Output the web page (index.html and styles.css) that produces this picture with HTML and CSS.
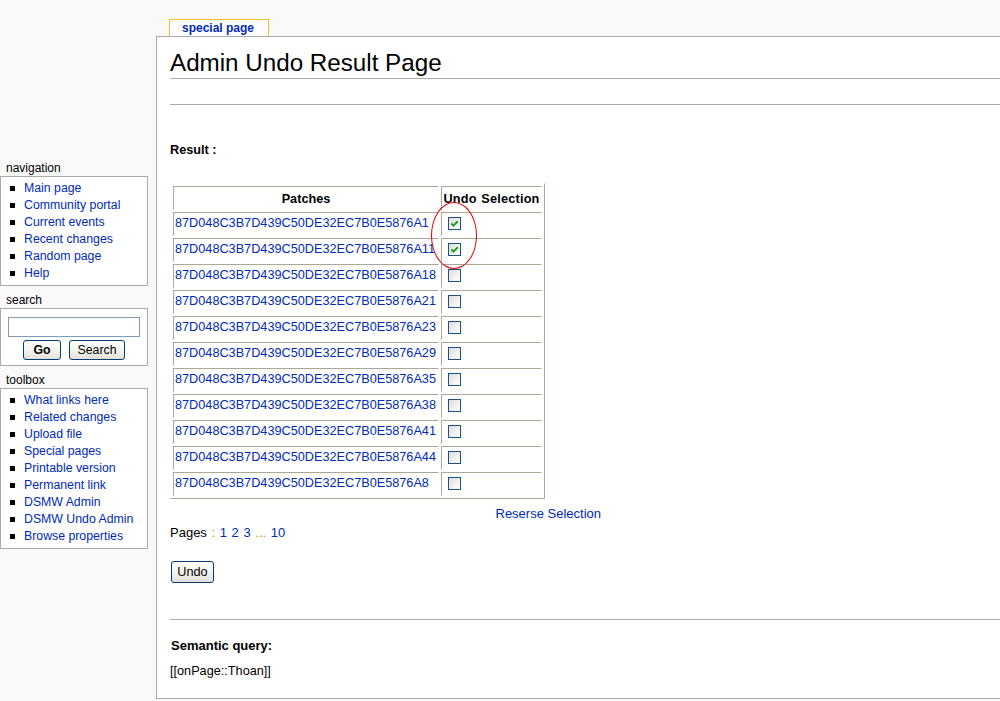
FILE: index.html
```html
<!DOCTYPE html>
<html>
<head>
<meta charset="utf-8">
<title>Admin Undo Result Page</title>
<link rel="stylesheet" href="styles.css">
</head>
<body>
<div class="page">
  <aside class="sidebar">
    <div class="portlet">
      <h5 class="portlet-title">navigation</h5>
      <ul class="portlet-body links">
        <li><a href="#">Main page</a></li>
        <li><a href="#">Community portal</a></li>
        <li><a href="#">Current events</a></li>
        <li><a href="#">Recent changes</a></li>
        <li><a href="#">Random page</a></li>
        <li><a href="#">Help</a></li>
      </ul>
    </div>
    <div class="portlet">
      <h5 class="portlet-title">search</h5>
      <div class="portlet-body search-body">
        <div class="search-input"></div>
        <div class="search-buttons">
          <span class="xp-btn go-btn">Go</span>
          <span class="xp-btn search-btn">Search</span>
        </div>
      </div>
    </div>
    <div class="portlet">
      <h5 class="portlet-title">toolbox</h5>
      <ul class="portlet-body links">
        <li><a href="#">What links here</a></li>
        <li><a href="#">Related changes</a></li>
        <li><a href="#">Upload file</a></li>
        <li><a href="#">Special pages</a></li>
        <li><a href="#">Printable version</a></li>
        <li><a href="#">Permanent link</a></li>
        <li><a href="#">DSMW Admin</a></li>
        <li><a href="#">DSMW Undo Admin</a></li>
        <li><a href="#">Browse properties</a></li>
      </ul>
    </div>
  </aside>

  <main class="column">
    <div class="tabs"><span class="tab">special page</span></div>
    <div class="content">
      <h1 class="first-heading">Admin Undo Result Page</h1>
      <div class="subline"></div>
      <p class="result-label">Result :</p>

      <div class="table-wrap">
        <table class="patches">
          <thead>
            <tr><th class="c1">Patches</th><th class="c2">Undo Selection</th></tr>
          </thead>
          <tbody>
            <tr><td><a href="#">87D048C3B7D439C50DE32EC7B0E5876A1</a></td><td><span class="cb checked"><svg viewBox="0 0 11 11" width="11" height="11"><path d="M2.2 5.4 L4.4 7.6 L8.8 3.2" fill="none" stroke="#21a121" stroke-width="2"/></svg></span></td></tr>
            <tr><td><a href="#">87D048C3B7D439C50DE32EC7B0E5876A11</a></td><td><span class="cb checked"><svg viewBox="0 0 11 11" width="11" height="11"><path d="M2.2 5.4 L4.4 7.6 L8.8 3.2" fill="none" stroke="#21a121" stroke-width="2"/></svg></span></td></tr>
            <tr><td><a href="#">87D048C3B7D439C50DE32EC7B0E5876A18</a></td><td><span class="cb"></span></td></tr>
            <tr><td><a href="#">87D048C3B7D439C50DE32EC7B0E5876A21</a></td><td><span class="cb"></span></td></tr>
            <tr><td><a href="#">87D048C3B7D439C50DE32EC7B0E5876A23</a></td><td><span class="cb"></span></td></tr>
            <tr><td><a href="#">87D048C3B7D439C50DE32EC7B0E5876A29</a></td><td><span class="cb"></span></td></tr>
            <tr><td><a href="#">87D048C3B7D439C50DE32EC7B0E5876A35</a></td><td><span class="cb"></span></td></tr>
            <tr><td><a href="#">87D048C3B7D439C50DE32EC7B0E5876A38</a></td><td><span class="cb"></span></td></tr>
            <tr><td><a href="#">87D048C3B7D439C50DE32EC7B0E5876A41</a></td><td><span class="cb"></span></td></tr>
            <tr><td><a href="#">87D048C3B7D439C50DE32EC7B0E5876A44</a></td><td><span class="cb"></span></td></tr>
            <tr><td><a href="#">87D048C3B7D439C50DE32EC7B0E5876A8</a></td><td><span class="cb"></span></td></tr>
          </tbody>
        </table>
        <div class="red-ring"></div>
      </div>

      <div class="reverse"><a href="#">Reserse Selection</a></div>
      <div class="pages">Pages <span class="sep">:</span> <a href="#">1</a> <a href="#">2</a> <a href="#">3</a> <span class="sep">...</span> <a href="#">10</a></div>
      <div class="undo-row"><span class="xp-btn undo-btn">Undo</span></div>
      <div class="rule"></div>
      <p class="sq-label">Semantic query:</p>
      <p class="sq-text">[[onPage::Thoan]]</p>
    </div>
  </main>
</div>
</body>
</html>
```

FILE: styles.css
```css
* { box-sizing: border-box; }
html, body {
  margin: 0;
  padding: 0;
  overflow: hidden;
}
body {
  background: #f9f9f9;
  font-family: "Liberation Sans", Arial, sans-serif;
  font-size: 12.7px;
  color: #000;
  width: 1000px;
  height: 701px;
}
a { color: #002bb8; text-decoration: none; }

.page {
  display: flex;
  align-items: flex-start;
}

/* Sidebar */
.sidebar {
  width: 148px;
  flex: 0 0 148px;
  padding-top: 160px;
}
.portlet + .portlet { margin-top: 6px; }
.portlet-title {
  margin: 0;
  padding: 0 6px;
  font-size: 12px;
  font-weight: normal;
  line-height: 16px;
  height: 16px;
  color: #000;
}
.portlet-body {
  background: #fff;
  border: 1px solid #aaa;
  margin: 0;
}
.links {
  list-style: none;
  padding: 3px 0 3px 0;
}
.links li {
  display: flex;
  align-items: center;
  height: 17px;
  font-size: 12.3px;
  line-height: 17px;
}
.links li::before {
  content: "";
  width: 5px;
  height: 5px;
  background: #000;
  margin-left: 9px;
  margin-right: 9px;
  flex: 0 0 5px;
}
.search-body {
  padding: 8px 0 5px 7px;
}
.search-input {
  width: 132px;
  height: 20px;
  border: 1px solid #7f9db9;
  background: #fff;
}
.search-buttons {
  display: flex;
  justify-content: center;
  gap: 8px;
  margin-top: 3px;
  padding-right: 7px;
}
.xp-btn {
  display: inline-flex;
  align-items: center;
  justify-content: center;
  height: 20px;
  border: 1px solid #003c74;
  border-radius: 3px;
  background: linear-gradient(#ffffff 0%, #f4f3ee 50%, #e3e1d6 100%);
  font-size: 12.3px;
  color: #000;
}
.go-btn { width: 38px; font-weight: bold; }
.search-btn { width: 56px; }

/* Column */
.column {
  margin-left: 8px;
  flex: 1;
  min-width: 0;
}
.tabs {
  height: 36px;
  display: flex;
  align-items: flex-end;
  padding-left: 13px;
}
.tab {
  height: 17px;
  border: 1px solid #fabd23;
  border-bottom: none;
  background: #fff;
  padding: 0 14px 0 12px;
  font-size: 12px;
  font-weight: bold;
  line-height: 16px;
  color: #002bb8;
}
.content {
  background: #fff;
  border: 1px solid #aaa;
  border-right: none;
  height: 663px;
  padding-left: 13px;
}
.first-heading {
  margin: 0;
  padding: 12px 0 1px 0;
  font-size: 24.2px;
  font-weight: normal;
  line-height: 28px;
  border-bottom: 1px solid #aaa;
}
.subline {
  height: 26px;
  border-bottom: 1px solid #aaa;
}
.result-label {
  margin: 37px 0 0 0;
  font-weight: bold;
  line-height: 16px;
}
.table-wrap {
  position: relative;
  margin-top: 25px;
  width: 375px;
}
.patches {
  border-collapse: separate;
  border-spacing: 2px;
  table-layout: fixed;
  width: 375px;
  border-top: 1px solid #fff;
  border-left: 1px solid #fff;
  border-right: 1px solid #aca899;
  border-bottom: 1px solid #aca899;
}
.patches th, .patches td {
  border-top: 1px solid #aca899;
  border-left: 1px solid #aca899;
  border-right: 1px solid #fff;
  border-bottom: 1px solid #fff;
  padding: 1px;
  height: 24px;
  line-height: 20px;
  font-size: 12.7px;
  white-space: nowrap;
  overflow: hidden;
}
.patches th { font-weight: bold; text-align: center; padding: 2px 1px 0 1px; }
.patches th.c1 { width: 266px; }
.patches th.c2 { width: 101px; word-spacing: 1px; letter-spacing: 0.2px; }
.patches td { text-align: left; }
.patches td a { position: relative; top: -1px; }
.cb {
  display: inline-flex;
  align-items: center;
  justify-content: center;
  width: 13px;
  height: 13px;
  margin-left: 5px;
  vertical-align: middle;
  border: 1px solid #1c5180;
  background: linear-gradient(135deg, #dcdcd7 0%, #f5f5f2 70%, #ffffff 100%);
  position: relative;
  top: -1px;
}
.red-ring {
  position: absolute;
  left: 261px;
  top: 19px;
  width: 46px;
  height: 67px;
  border: 1px solid #e00000;
  border-radius: 50%;
}
.reverse {
  width: 431px;
  text-align: right;
  margin-top: 7px;
  line-height: 16px;
  font-size: 13px;
}
.pages {
  margin-top: 3px;
  line-height: 16px;
  font-size: 13px;
  word-spacing: 1px;
}
.pages .sep { color: #c88a00; }
.undo-row {
  margin-top: 21px;
  padding-left: 1px;
}
.undo-btn {
  width: 43px;
  height: 22px;
  font-size: 12.7px;
  position: relative;
  top: -1px;
}
.rule {
  margin-top: 35px;
  border-top: 1px solid #aaa;
}
.sq-label {
  margin: 18px 0 0 1px;
  font-weight: bold;
  line-height: 16px;
  font-size: 13px;
}
.sq-text {
  margin: 9px 0 0 0;
  line-height: 16px;
}
```
